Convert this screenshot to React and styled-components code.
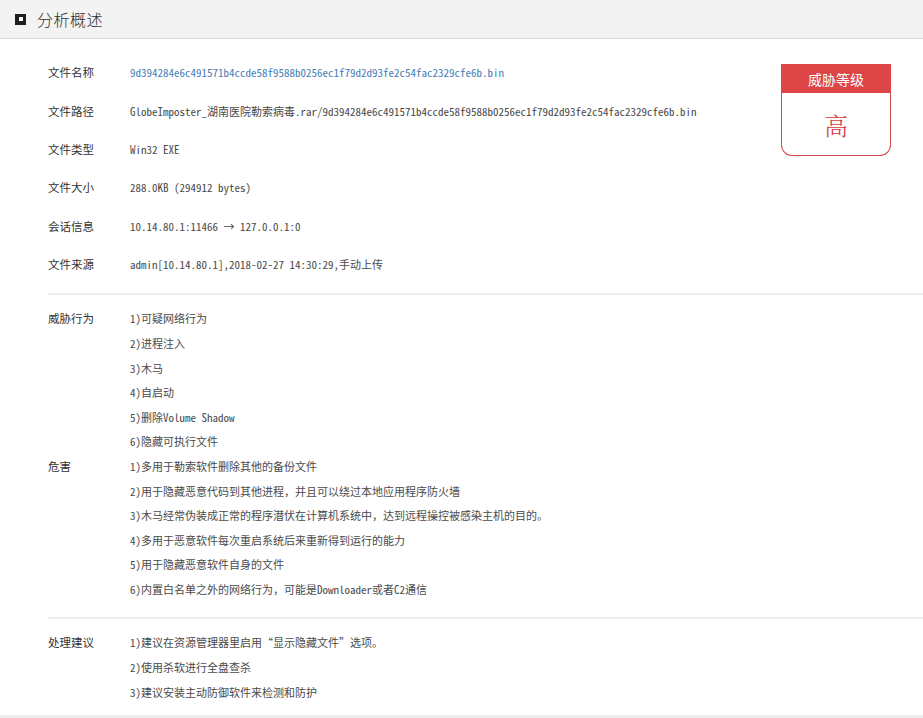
import React from "react";
import styled, { createGlobalStyle } from "styled-components";

const GlobalStyle = createGlobalStyle`
  body {
    margin: 0;
    background: #ffffff;
  }
`;

const Page = styled.div`
  width: 923px;
  min-height: 718px;
  box-sizing: border-box;
  border-bottom: 3px solid #ededed;
  font-family: "Noto Sans Mono CJK SC", "Liberation Mono", "Noto Sans CJK SC", monospace;
  color: #333;
`;

const Header = styled.div`
  height: 38px;
  background: #f3f3f4;
  border-bottom: 1px solid #d7d7d7;
  display: flex;
  align-items: center;
  gap: 11px;
  padding-left: 15px;
`;

const HeaderIcon = styled.span`
  width: 11px;
  height: 11px;
  background: #1f1f1f;
  display: flex;
  align-items: center;
  justify-content: center;

  &::after {
    content: "";
    width: 4px;
    height: 4px;
    background: #fff;
  }
`;

const HeaderTitle = styled.div`
  font-family: "Noto Sans CJK SC", sans-serif;
  font-size: 16px;
  font-weight: 300;
  color: #2d2d2d;
  letter-spacing: 0.5px;
`;

const Content = styled.div`
  padding-left: 48px;
`;

const InfoSection = styled.div`
  display: flex;
  justify-content: space-between;
  align-items: flex-start;
  padding-top: 14px;
  padding-bottom: 10px;
`;

const InfoRows = styled.div`
  display: flex;
  flex-direction: column;
`;

const InfoRow = styled.div`
  display: grid;
  grid-template-columns: 82px auto;
  align-items: center;
  height: 38.4px;
  font-size: 11px;
`;

const Label = styled.div`
  font-family: "Noto Sans CJK SC", sans-serif;
  font-size: 11.5px;
  color: #333;
`;

const Value = styled.div`
  color: ${(p) => (p.$link ? "#4a7db5" : "#4a4a4a")};
  white-space: nowrap;
`;

const Badge = styled.div`
  width: 110px;
  margin-top: 11px;
  margin-right: 32px;
  display: flex;
  flex-direction: column;
`;

const BadgeHead = styled.div`
  height: 29px;
  background: #dc4446;
  color: #fff;
  font-family: "Noto Sans CJK SC", sans-serif;
  font-size: 14px;
  display: flex;
  align-items: center;
  justify-content: center;
`;

const BadgeBody = styled.div`
  height: 62px;
  border: 1px solid #d6474a;
  border-top: none;
  border-radius: 0 0 11px 11px;
  display: flex;
  align-items: center;
  justify-content: center;
  color: #d8393c;
  font-family: "Noto Serif CJK SC", "Noto Sans CJK SC", serif;
  font-size: 24px;
  font-weight: 300;
`;

const Divider = styled.div`
  height: 2px;
  background: #ececec;
`;

const ListSection = styled.div`
  padding: ${(p) => p.$pad};
`;

const ListGroup = styled.div`
  display: grid;
  grid-template-columns: 82px auto;
`;

const ListItems = styled.div`
  display: flex;
  flex-direction: column;
`;

const ListItem = styled.div`
  height: 24.6px;
  line-height: 24.6px;
  font-size: 11px;
  color: #4a4a4a;
  white-space: nowrap;
`;

const ListLabel = styled(Label)`
  height: 24.6px;
  line-height: 24.6px;
`;

const info = [
  ["文件名称", "9d394284e6c491571b4ccde58f9588b0256ec1f79d2d93fe2c54fac2329cfe6b.bin", true],
  ["文件路径", "GlobeImposter_湖南医院勒索病毒.rar/9d394284e6c491571b4ccde58f9588b0256ec1f79d2d93fe2c54fac2329cfe6b.bin"],
  ["文件类型", "Win32 EXE"],
  ["文件大小", "288.0KB (294912 bytes)"],
  ["会话信息", "10.14.80.1:11466 → 127.0.0.1:0"],
  ["文件来源", "admin[10.14.80.1],2018-02-27 14:30:29,手动上传"],
];

const threats = [
  {
    label: "威胁行为",
    items: ["1)可疑网络行为", "2)进程注入", "3)木马", "4)自启动", "5)删除Volume Shadow", "6)隐藏可执行文件"],
  },
  {
    label: "危害",
    items: [
      "1)多用于勒索软件删除其他的备份文件",
      "2)用于隐藏恶意代码到其他进程，并且可以绕过本地应用程序防火墙",
      "3)木马经常伪装成正常的程序潜伏在计算机系统中，达到远程操控被感染主机的目的。",
      "4)多用于恶意软件每次重启系统后来重新得到运行的能力",
      "5)用于隐藏恶意软件自身的文件",
      "6)内置白名单之外的网络行为，可能是Downloader或者C2通信",
    ],
  },
];

const advice = {
  label: "处理建议",
  items: ["1)建议在资源管理器里启用“显示隐藏文件”选项。", "2)使用杀软进行全盘查杀", "3)建议安装主动防御软件来检测和防护"],
};

const Group = ({ label, items }) => (
  <ListGroup>
    <ListLabel>{label}</ListLabel>
    <ListItems>
      {items.map((t) => (
        <ListItem key={t}>{t}</ListItem>
      ))}
    </ListItems>
  </ListGroup>
);

const App = () => {
  return (
    <Page>
      <GlobalStyle />
      <Header>
        <HeaderIcon />
        <HeaderTitle>分析概述</HeaderTitle>
      </Header>
      <Content>
        <InfoSection>
          <InfoRows>
            {info.map(([label, value, link]) => (
              <InfoRow key={label}>
                <Label>{label}</Label>
                <Value $link={link}>{value}</Value>
              </InfoRow>
            ))}
          </InfoRows>
          <Badge>
            <BadgeHead>威胁等级</BadgeHead>
            <BadgeBody>高</BadgeBody>
          </Badge>
        </InfoSection>
        <Divider />
        <ListSection $pad="11px 0 16px">
          {threats.map((g) => (
            <Group key={g.label} {...g} />
          ))}
        </ListSection>
        <Divider />
        <ListSection $pad="11px 0 10px">
          <Group {...advice} />
        </ListSection>
      </Content>
    </Page>
  );
};

export default App;
